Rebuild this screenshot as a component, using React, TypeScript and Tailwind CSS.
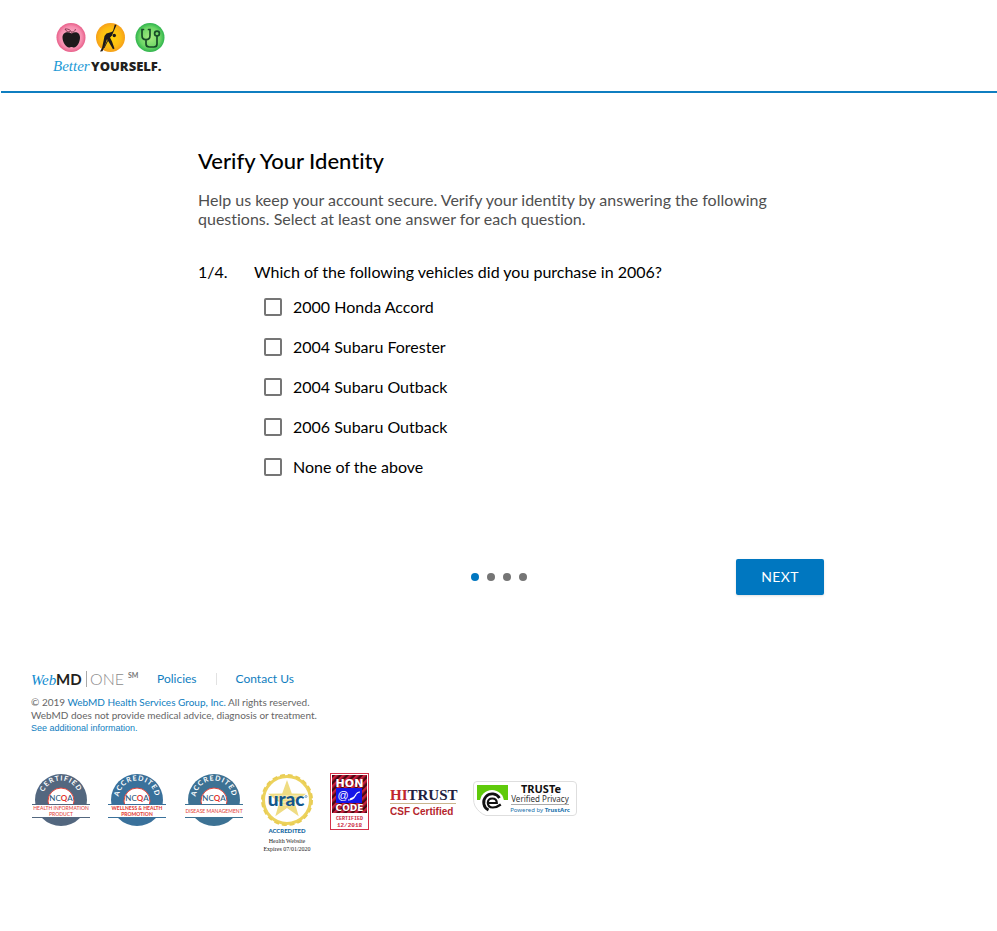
import { useState } from "react";

const answers = [
  "2000 Honda Accord",
  "2004 Subaru Forester",
  "2004 Subaru Outback",
  "2006 Subaru Outback",
  "None of the above",
];

function BetterYourselfLogo() {
  return (
    <svg width="114" height="56" viewBox="52 20 114 56" role="img" aria-label="Better Yourself">
      <defs>
        <radialGradient id="pink"><stop offset="0" stopColor="#fbc0d2" /><stop offset="0.75" stopColor="#f68fb0" /><stop offset="1" stopColor="#e8608a" /></radialGradient>
        <radialGradient id="gold"><stop offset="0" stopColor="#ffd60a" /><stop offset="0.7" stopColor="#fdbb13" /><stop offset="1" stopColor="#f6a01a" /></radialGradient>
        <radialGradient id="green"><stop offset="0" stopColor="#a6ea80" /><stop offset="0.7" stopColor="#6dd666" /><stop offset="1" stopColor="#2fb44d" /></radialGradient>
      </defs>
      <circle cx="71" cy="37.5" r="14.5" fill="url(#pink)" />
      <path d="M71.500 33.500c-3.500-2.500-9-1.500-9 4 0 4.500 3.500 10 6.500 10 1.200 0 1.500-.5 2.500-.5s1.300.5 2.500.5c3 0 6-5.500 6-10 0-5.500-5-6.500-8.500-4z" fill="#1d1a1c" />
      <path d="M72 34c0-3-3-5.500-7-5 1 2.500 3 3 5.500 2.500M72 32c2 0 3-1 3.500-3" fill="none" stroke="#6b2a3f" strokeWidth="0.800" />
      <circle cx="110.500" cy="37.500" r="14.500" fill="url(#gold)" />
      <circle cx="114.300" cy="35.500" r="1.700" fill="#1d1a1c" />
      <path d="M114.800 24.500l1.700.5-3.500 8-1 2.500-2 2 2 4 2.500 7-1.500.7-3.500-6-2.500-4-2 6-2.500 6-2.500.3 2-3.500 1.500-7 1-5 2-2.500 5-1.500 1.500-1z" fill="#1d1a1c" />
      <path d="M111 35l-4 7-3 6" fill="none" stroke="#1d1a1c" strokeWidth="1" />
      <circle cx="150" cy="37.500" r="14.500" fill="url(#green)" />
      <g fill="none" stroke="#174b27" strokeWidth="1.700" strokeLinecap="round">
        <path d="M143.500 29.500h-1.500v6c0 5.500 8 5.500 8 0v-6h-1.500M146 40v4q0 3 3.500 3h4.500q3 0 3-3v-8" />
        <circle cx="157" cy="33.500" r="2.400" />
      </g>
      <text x="53" y="71" fill="#1c9ad6" className="font-['Liberation_Serif',serif] text-[15px] italic">Better</text>
      <text x="91" y="71" fill="#231f20" className="font-['Open_Sans',sans-serif] text-[13px] font-extrabold">YOURSELF.</text>
    </svg>
  );
}

function WebMdOneLogo() {
  return (
    <svg width="108" height="22" viewBox="31 666 108 22" role="img" aria-label="WebMD ONE" className="overflow-visible">
      <text x="31" y="683" fill="#0f8bd0" className="font-['Liberation_Serif',serif] text-[15px] font-medium italic">Web</text>
      <text x="56" y="683" fill="#231f20" className="font-['Lato',sans-serif] text-[15px] font-bold">MD</text>
      <path d="M86.500 669v16" stroke="#a9a9a9" />
      <text x="90" y="683" fill="#8c8c8c" className="font-['Lato',sans-serif] text-[16px] font-light">ONE</text>
      <text x="128" y="676" fill="#777" className="font-['Lato',sans-serif] text-[7px] font-bold">SM</text>
    </svg>
  );
}

type NcqaProps = { id: string; arc: string; lines: string[]; color: string; heavy?: boolean };

function NcqaBadge({ id, arc, lines, color, heavy }: NcqaProps) {
  return (
    <svg width="58" height="56" viewBox="0 0 58 56" role="img" aria-label={`NCQA ${arc} ${lines.join(" ")}`}>
      <defs><path id={id} d="M10.500 26A18.500 18.500 0 0 1 47.500 26" /></defs>
      <circle cx="29" cy="27" r="26" fill={color} />
      <circle cx="29" cy="28" r="13" fill="#fff" stroke="#e2453c" strokeWidth="1" />
      <rect x="0" y="31.500" width="58" height="13" fill="#fff" />
      <path d="M0 31.500h58M0 44.500h58" stroke={color} strokeWidth="1" />
      <text fill="#fff" textAnchor="middle" className="font-['Lato',sans-serif] text-[7px] font-bold tracking-[1px]">
        <textPath href={`#${id}`} startOffset="50%">{arc}</textPath>
      </text>
      <text x="29" y="28" fill="#29577c" textAnchor="middle" className="font-['Lato',sans-serif] text-[8px] font-medium">
        NC<tspan fill="#e2352c" className="font-bold">Q</tspan>A
      </text>
      {lines.map((line, i) => (
        <text key={line} x="29" y={(lines.length === 1 ? 40 : 37) + i * 6} fill="#e2453c" textAnchor="middle"
          className={heavy ? "font-['Lato',sans-serif] text-[5px] font-black" : "font-['Lato',sans-serif] text-[5px] font-medium"}>
          {line}
        </text>
      ))}
    </svg>
  );
}

function UracBadge() {
  return (
    <svg width="54" height="80" viewBox="0 0 54 80" role="img" aria-label="URAC accredited Health Website">
      <circle cx="27" cy="27" r="23.500" fill="#fff" stroke="#ecd25c" strokeWidth="3" />
      <circle cx="27" cy="27" r="25" fill="none" stroke="#e9cd55" strokeWidth="2" strokeDasharray="5 2.854" />
      <path d="M27 7l4.800 13.500 14.200.3-11.300 8.700 4 13.700L27 35l-11.700 8.200 4-13.700L8 20.800l14.200-.3z" fill="#efdc82" />
      <path d="M14 23h26M14 26h26M14 29h26M14 32h26" stroke="#fff" strokeWidth="1" opacity="0.600" />
      <text x="26" y="33" fill="#14578c" textAnchor="middle" className="font-['Lato',sans-serif] text-[19px] font-black">urac</text>
      <circle cx="46" cy="23.500" r="1" fill="none" stroke="#14578c" strokeWidth="0.500" />
      <text x="27" y="60" fill="#14679f" textAnchor="middle" className="font-['Lato',sans-serif] text-[6px] font-black">ACCREDITED</text>
      <text x="27" y="70" fill="#222" textAnchor="middle" className="font-['Liberation_Serif',serif] text-[6px]">Health Website</text>
      <text x="27" y="78" fill="#222" textAnchor="middle" className="font-['Liberation_Serif',serif] text-[6px]">Expires 07/01/2020</text>
    </svg>
  );
}

function HonBadge() {
  return (
    <svg width="39" height="57" viewBox="0 0 39 57" role="img" aria-label="HON Code certified 12/2018">
      <defs>
        <pattern id="hatch" width="5" height="5" patternUnits="userSpaceOnUse" patternTransform="rotate(45)">
          <rect width="5" height="5" fill="#4a0712" /><rect width="2.500" height="5" fill="#c5203c" />
        </pattern>
      </defs>
      <rect x="0.500" y="0.500" width="38" height="56" fill="#fff" stroke="#d5324a" />
      <rect x="2" y="2" width="35" height="38" fill="url(#hatch)" />
      <rect x="6" y="15" width="26" height="15" fill="#1515e8" />
      <text x="19.500" y="14" fill="#fff" textAnchor="middle" className="font-['DejaVu_Sans',sans-serif] text-[11px] font-bold">HON</text>
      <text x="13" y="26" fill="#fff" textAnchor="middle" className="font-['Liberation_Sans',sans-serif] text-[11px]">@</text>
      <path d="M18 27q5 0 7-4t5-4M20 26q4-1 6-4" fill="none" stroke="#fff" strokeWidth="1.200" />
      <text x="19.500" y="38" fill="#fff" textAnchor="middle" className="font-['DejaVu_Sans',sans-serif] text-[9px] font-bold">CODE</text>
      <text x="19.500" y="47" fill="#cc2944" textAnchor="middle" className="font-['Liberation_Mono',monospace] text-[5px] font-bold">CERTIFIED</text>
      <text x="19.500" y="54" fill="#cc2944" textAnchor="middle" className="font-['Liberation_Mono',monospace] text-[6px] font-bold">12/2018</text>
    </svg>
  );
}

function HitrustBadge() {
  return (
    <svg width="68" height="36" viewBox="0 0 68 36" role="img" aria-label="HITRUST CSF Certified">
      <text x="0" y="18" fill="#c1272d" className="font-['Liberation_Serif',serif] text-[15px] font-bold">
        HI<tspan fill="#22213f">TRUST</tspan>
      </text>
      <path d="M0 21.500h66" stroke="#c9b68e" />
      <text x="0" y="33" fill="#b5252c" className="font-['Liberation_Sans',sans-serif] text-[10px] font-bold">CSF Certified</text>
    </svg>
  );
}

function TrusteBadge() {
  return (
    <svg width="104" height="35" viewBox="0 0 104 35" role="img" aria-label="TRUSTe Verified Privacy, Powered by TrustArc">
      <path d="M4 .500h96q3.500 0 3.500 3.500v27q0 3.500-3.500 3.500H13Q6 32 2 25q-1.500-3-1.500-8V4Q.500.500 4 .500z" fill="#fff" stroke="#dedede" />
      <path d="M4 4h31v15H4z" fill="#5fca0a" />
      <circle cx="19" cy="21" r="12" fill="#fff" />
      <path d="M26.500 17a8.500 8.500 0 1 0-11 12" fill="none" stroke="#111" strokeWidth="2.800" />
      <path d="M14.500 22h9.300q0-4.500-4.500-4.500t-4.500 4.500q.3 4.500 5 4.500 4 0 8-3" fill="none" stroke="#111" strokeWidth="2.200" />
      <text x="68" y="12" fill="#111" textAnchor="middle" className="font-['Noto_Sans',sans-serif] text-[11px] font-bold">TRUSTe</text>
      <text x="67" y="21" fill="#333" textAnchor="middle" className="font-['Noto_Sans',sans-serif] text-[8px]">Verified Privacy</text>
      <path d="M38 23.500h58" stroke="#aaa" />
      <text x="67" y="31" fill="#2071ac" textAnchor="middle" className="font-['Noto_Sans',sans-serif] text-[6px]">
        Powered by <tspan className="font-bold">TrustArc</tspan>
      </text>
    </svg>
  );
}

export default function App() {
  const [picked, setPicked] = useState<string[]>([]);
  const toggle = (answer: string) =>
    setPicked((all) => (all.includes(answer) ? all.filter((a) => a !== answer) : [...all, answer]));

  return (
    <div className="min-h-screen bg-white pl-px font-['Lato',sans-serif] text-black [font-variant-ligatures:none]">
      <header className="border-b-2 border-[#0f7ec0] pt-5 pb-[15px] pl-[51px]">
        <BetterYourselfLogo />
      </header>

      <main className="mx-auto max-w-[650px] pt-[54px]">
        <form onSubmit={(e) => e.preventDefault()}>
          <div className="pl-6">
            <h1 className="text-[22px] leading-7 font-medium">Verify Your Identity</h1>
            <p className="mt-[15px] text-base leading-[19px] text-[#4f4f4f]">
              Help us keep your account secure. Verify your identity by answering the following questions. Select at
              least one answer for each question.
            </p>
            <fieldset className="mt-8 grid grid-cols-[56px_1fr]">
              <span className="text-base leading-6">1/4.</span>
              <div>
                <legend className="text-base leading-6">Which of the following vehicles did you purchase in 2006?</legend>
                <div className="mt-[3px] pl-[10px]">
                  {answers.map((answer) => (
                    <label key={answer} className="flex h-10 items-center gap-[11px] text-base">
                      <input
                        type="checkbox"
                        checked={picked.includes(answer)}
                        onChange={() => toggle(answer)}
                        className="size-[18px] appearance-none rounded-xs border-2 border-[#757575] checked:border-[#0077c0] checked:bg-[#0077c0]"
                      />
                      {answer}
                    </label>
                  ))}
                </div>
              </div>
            </fieldset>
          </div>
          <div className="mt-[72px] grid grid-cols-3 items-center">
            <div className="col-start-2 flex justify-center gap-2">
              <span className="size-2 rounded-full bg-[#0077c0]" />
              <span className="size-2 rounded-full bg-[#757575]" />
              <span className="size-2 rounded-full bg-[#757575]" />
              <span className="size-2 rounded-full bg-[#757575]" />
            </div>
            <button type="submit" className="h-9 w-[88px] justify-self-end rounded-xs bg-[#0077c0] text-sm tracking-wide text-white shadow-sm">
              NEXT
            </button>
          </div>
        </form>
      </main>

      <footer className="pt-[73px] pl-[30px]">
        <div className="flex items-center text-xs leading-[18px] text-[#0f7ec0]">
          <WebMdOneLogo />
          <a href="#policies" className="ml-[18px]">Policies</a>
          <span className="ml-[19px] h-3 w-px bg-[#e2e2e2]" />
          <a href="#contact" className="ml-[19px]">Contact Us</a>
        </div>
        <div className="mt-[6px] text-[10px] leading-[13px] text-[#666]">
          <p>© 2019 <a href="#webmd" className="text-[#0f7ec0]">WebMD Health Services Group, Inc.</a> All rights reserved.</p>
          <p>WebMD does not provide medical advice, diagnosis or treatment.</p>
          <a href="#more" className="block font-['Liberation_Sans',sans-serif] text-[9px] text-[#0f7ec0]">See additional information.</a>
        </div>
        <div className="mt-[38px] flex flex-wrap items-start pl-px">
          <NcqaBadge id="arc-a" arc="CERTIFIED" color="#53677f" lines={["HEALTH INFORMATION", "PRODUCT"]} />
          <div className="ml-[18px]">
            <NcqaBadge id="arc-b" arc="ACCREDITED" color="#3a719b" heavy lines={["WELLNESS & HEALTH", "PROMOTION"]} />
          </div>
          <div className="ml-[19px]">
            <NcqaBadge id="arc-c" arc="ACCREDITED" color="#3d7294" lines={["DISEASE MANAGEMENT"]} />
          </div>
          <div className="ml-[17px]"><UracBadge /></div>
          <div className="ml-4"><HonBadge /></div>
          <div className="mt-[9px] ml-[21px]"><HitrustBadge /></div>
          <div className="mt-2 ml-[15px]"><TrusteBadge /></div>
        </div>
      </footer>
    </div>
  );
}
